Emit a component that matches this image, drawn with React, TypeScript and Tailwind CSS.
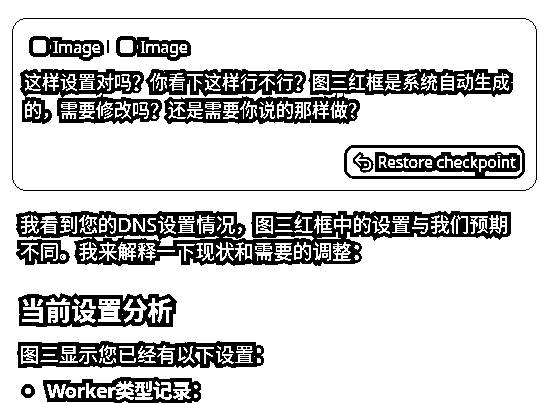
const halo = 'text-white [-webkit-text-stroke:8px_#000] [paint-order:stroke_fill] brightness-[1.7]';

function ImageChip() {
  return (
    <span className="flex items-center gap-[3px]">
      <span className="h-[21px] w-[21px] rounded-[6px] border-[4px] border-black bg-white" />
      <span className={`text-[16.5px] leading-5 tracking-[-0.5px] ${halo}`}>Image</span>
    </span>
  );
}

export default function App() {
  return (
    <div className="h-[403px] w-[540px] overflow-hidden bg-white px-3 pt-[18px] font-['Noto_Sans','Noto_Sans_CJK_SC',sans-serif] text-[19.5px] leading-[27px] contrast-[100]">
      {/* Message card */}
      <div className="mr-[-9px] flex h-[173px] flex-col rounded-[14px] border border-black px-[11px] pt-[17px]">
        <div className="flex items-center gap-[7px] pl-[5px]">
          <ImageChip />
          <span className="h-[13px] w-[2px] bg-black" />
          <ImageChip />
        </div>
        <p className={`mt-[11px] text-[18px] leading-[28px] ${halo}`}>这样设置对吗&#xFF1F;你看下这样行不行&#xFF1F;图三红框是系统自动生成的&#xFF0C;需要修改吗&#xFF1F;还是需要你说的那样做&#xFF1F;</p>
        <div className="mt-auto mb-[11px] flex justify-end">
          <button className="flex h-[34px] w-[181px] items-center justify-center gap-[2px] rounded-[10px] border-[3px] border-black bg-white">
            <svg width="22" height="22" viewBox="0 0 24 24" fill="none" strokeLinecap="round" strokeLinejoin="round">
              <g stroke="#000" strokeWidth="7">
                <path d="M8 5 3 10l5 5" />
                <path d="M3 10h11a5 5 0 0 1 0 10h-3" />
              </g>
              <g stroke="#fff" strokeWidth="2">
                <path d="M8 5 3 10l5 5" />
                <path d="M3 10h11a5 5 0 0 1 0 10h-3" />
              </g>
            </svg>
            <span className={`text-[16px] tracking-[-0.3px] ${halo}`}>Restore checkpoint</span>
          </button>
        </div>
      </div>

      {/* Reply */}
      <div className="px-2 pt-5">
        <p className={halo}>我看到您的DNS设置情况&#xFF0C;图三红框中的设置与我们预期不同&#x3002;我来解释一下现状和需要的调整&#xFF1A;</p>
        <h2 className={`mt-[27px] text-[25.5px] leading-9 font-bold ${halo}`}>当前设置分析</h2>
        <p className={`mt-[13px] ${halo}`}>图三显示您已经有以下设置&#xFF1A;</p>
        <div className="mt-[9px] flex items-center gap-3">
          <span className="ml-[1px] h-[14px] w-[14px] rounded-full border-[4px] border-black bg-white" />
          <span className={`font-bold tracking-[-0.6px] ${halo}`}>Worker类型记录&#xFF1A;</span>
        </div>
      </div>
    </div>
  );
}
